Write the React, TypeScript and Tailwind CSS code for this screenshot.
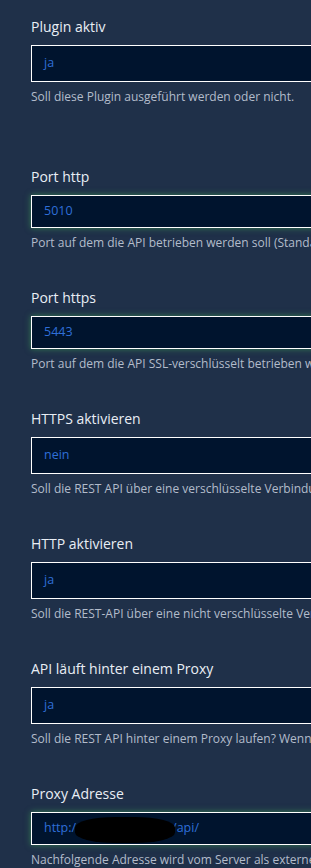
import React from "react"

type Campo = {
  label: string
  valor: string
  hilfe: string
  tipo: "select" | "input"
  redacted?: boolean
}

const campos: Campo[] = [
  { label: "Plugin aktiv", valor: "ja", hilfe: "Soll diese Plugin ausgeführt werden oder nicht.", tipo: "select" },
  { label: "Port http", valor: "5010", hilfe: "Port auf dem die API betrieben werden soll (Standard: 5010)", tipo: "input" },
  { label: "Port https", valor: "5443", hilfe: "Port auf dem die API SSL-verschlüsselt betrieben werden soll", tipo: "input" },
  { label: "HTTPS aktivieren", valor: "nein", hilfe: "Soll die REST API über eine verschlüsselte Verbindung laufen?", tipo: "select" },
  { label: "HTTP aktivieren", valor: "ja", hilfe: "Soll die REST-API über eine nicht verschlüsselte Verbindung laufen?", tipo: "select" },
  { label: "API läuft hinter einem Proxy", valor: "ja", hilfe: "Soll die REST API hinter einem Proxy laufen? Wenn ja, bitte Adresse angeben.", tipo: "select" },
  { label: "Proxy Adresse", valor: "", hilfe: "Nachfolgende Adresse wird vom Server als externe Adresse verwendet.", tipo: "input", redacted: true },
]

export default function App() {
  return (
    <div
      className="h-[868px] w-[311px] overflow-hidden bg-[#1f3049] pl-[31px] pt-[18px]"
      style={{ fontFamily: "'Open Sans', 'Noto Sans', sans-serif" }}
    >
      {campos.map((c, i) => (
        <div key={c.label} className={i === 0 ? "mb-[63px]" : "mb-[38px]"}>
          <div className="mb-[9px] whitespace-nowrap text-[14px] font-medium leading-[18px] text-[#e9eef5]">
            {c.label}
          </div>
          <div
            className={`relative flex w-[320px] items-center border border-white bg-[#00142e] pl-[12px] text-[12.5px] text-[#2f6fd8] ${
              c.tipo === "select" ? "h-[37px]" : "h-[33px] shadow-[0_0_6px_rgba(70,190,90,0.55)]"
            }`}
          >
            {c.redacted ? (
              <span className="flex items-center whitespace-nowrap">
                http:/
                <span className="relative inline-block h-[12px] w-[96px]">
                  <span className="absolute left-[-1px] top-[-6px] h-[26px] w-[100px] rounded-[40%] bg-black" />
                </span>
                /api/
              </span>
            ) : (
              c.valor
            )}
          </div>
          <div className="mt-[7px] whitespace-nowrap text-[12px] leading-[16px] text-[#b3bccb]">{c.hilfe}</div>
        </div>
      ))}
    </div>
  )
}
